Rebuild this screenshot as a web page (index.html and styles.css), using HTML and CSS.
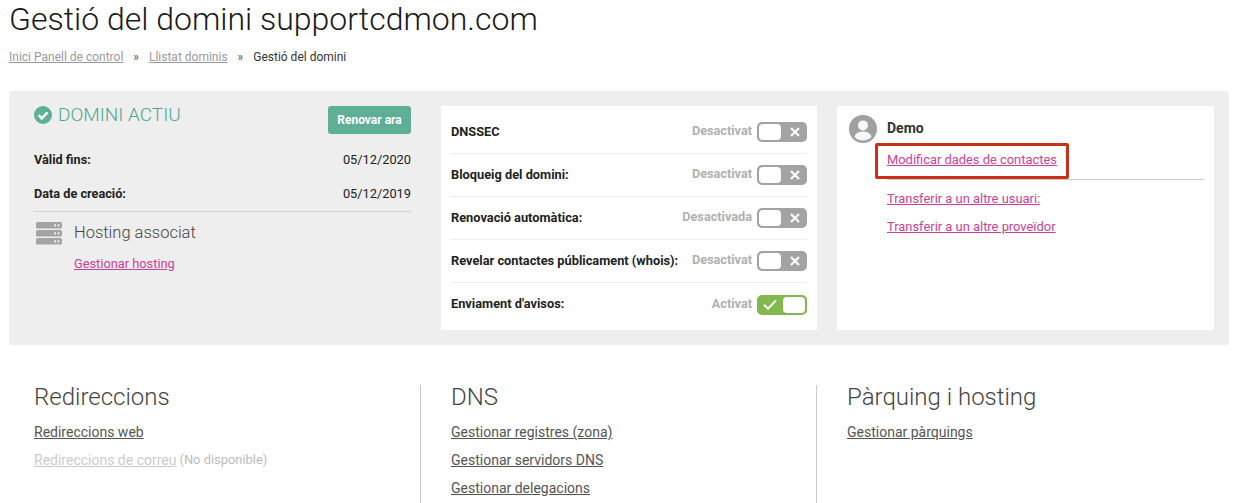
FILE: index.html
```html
<!DOCTYPE html>
<html lang="ca">
<head>
<meta charset="utf-8">
<title>Gestió del domini</title>
<link rel="stylesheet" href="styles.css">
</head>
<body>
<main class="page">
  <h1 class="title">Gestió del domini supportcdmon.com</h1>
  <nav class="crumbs">
    <a href="#">Inici Panell de control</a><span class="sep">»</span><a href="#">Llistat dominis</a><span class="sep">»</span><span class="here">Gestió del domini</span>
  </nav>

  <section class="panel">
    <div class="status">
      <div class="status-head">
        <h2 class="active">
          <svg class="check" viewBox="0 0 18 18" width="18" height="18"><circle cx="9" cy="9" r="9" fill="#5bb095"/><path d="M4.6 9.2l3.1 3.1 5.8-5.9" fill="none" stroke="#fff" stroke-width="2.6"/></svg>
          DOMINI ACTIU
        </h2>
        <a class="renew" href="#">Renovar ara</a>
      </div>
      <div class="date-row"><b>Vàlid fins:</b><span>05/12/2020</span></div>
      <div class="date-row date-last"><b>Data de creació:</b><span>05/12/2019</span></div>
      <div class="hosting">
        <svg class="server" viewBox="0 0 26 23" width="26" height="23">
          <g fill="#a3a3a3"><rect y="0" width="26" height="6.5" rx="1.5"/><rect y="8" width="26" height="6.5" rx="1.5"/><rect y="16" width="26" height="6.5" rx="1.5"/></g>
          <g fill="#eee"><rect x="18" y="2.4" width="2" height="2"/><rect x="21.5" y="2.4" width="2" height="2"/><rect x="18" y="10.4" width="2" height="2"/><rect x="21.5" y="10.4" width="2" height="2"/><rect x="18" y="18.4" width="2" height="2"/><rect x="21.5" y="18.4" width="2" height="2"/></g>
        </svg>
        <div>
          <h3 class="hosting-title">Hosting associat</h3>
          <a class="pink" href="#">Gestionar hosting</a>
        </div>
      </div>
    </div>

    <div class="card settings">
      <div class="set-row"><b>DNSSEC</b><span class="state">Desactivat</span><span class="toggle"><i class="knob"></i><svg class="mark" viewBox="0 0 10 10" width="10" height="10"><path d="M1 1l8 8M9 1l-8 8" stroke="#fff" stroke-width="2.2"/></svg></span></div>
      <div class="set-row"><b>Bloqueig del domini:</b><span class="state">Desactivat</span><span class="toggle"><i class="knob"></i><svg class="mark" viewBox="0 0 10 10" width="10" height="10"><path d="M1 1l8 8M9 1l-8 8" stroke="#fff" stroke-width="2.2"/></svg></span></div>
      <div class="set-row"><b>Renovació automàtica:</b><span class="state">Desactivada</span><span class="toggle"><i class="knob"></i><svg class="mark" viewBox="0 0 10 10" width="10" height="10"><path d="M1 1l8 8M9 1l-8 8" stroke="#fff" stroke-width="2.2"/></svg></span></div>
      <div class="set-row"><b>Revelar contactes públicament (whois):</b><span class="state">Desactivat</span><span class="toggle"><i class="knob"></i><svg class="mark" viewBox="0 0 10 10" width="10" height="10"><path d="M1 1l8 8M9 1l-8 8" stroke="#fff" stroke-width="2.2"/></svg></span></div>
      <div class="set-row"><b>Enviament d'avisos:</b><span class="state">Activat</span><span class="toggle on"><svg class="mark" viewBox="0 0 14 11" width="14" height="11"><path d="M1 5.800l4 4L13 1.400" fill="none" stroke="#fff" stroke-width="2"/></svg><i class="knob"></i></span></div>
    </div>

    <div class="card owner">
      <div class="owner-head">
        <svg class="avatar" viewBox="0 0 28 28" width="28" height="28"><circle cx="14" cy="14" r="14" fill="#a0a0a0"/><circle cx="14" cy="10.4" r="5" fill="#fff" fill-opacity=".93"/><path d="M5.500 22c1-4 4.500-5.500 8.500-5.500s7.500 1.500 8.500 5.500c-2 2.200-5 3.500-8.500 3.500s-6.500-1.300-8.500-3.500z" fill="#fff" fill-opacity=".93"/></svg>
        <b class="owner-name">Demo</b>
      </div>
      <div class="owner-links">
        <a class="pink contact" href="#">Modificar dades de contactes</a>
        <hr class="owner-rule">
        <a class="pink" href="#">Transferir a un altre usuari:</a>
        <a class="pink" href="#">Transferir a un altre proveïdor</a>
      </div>
      <div class="highlight"></div>
    </div>
  </section>

  <section class="services">
    <div class="svc">
      <h2>Redireccions</h2>
      <a href="#">Redireccions web</a>
      <p class="off"><a href="#">Redireccions de correu</a> <span>(No disponible)</span></p>
    </div>
    <div class="svc">
      <h2>DNS</h2>
      <a href="#">Gestionar registres (zona)</a>
      <a href="#">Gestionar servidors DNS</a>
      <a href="#">Gestionar delegacions</a>
    </div>
    <div class="svc">
      <h2>Pàrquing i hosting</h2>
      <a href="#">Gestionar pàrquings</a>
    </div>
  </section>
</main>
</body>
</html>
```

FILE: styles.css
```css
* { box-sizing: border-box; }
html, body { margin: 0; padding: 0; height: 503px; overflow: hidden; background: #fff; }
body { font-family: Roboto, "Liberation Sans", sans-serif; font-size: 13px; color: #222; }
.page { padding: 0 8px 0 9px; }
.title { margin: 0; height: 39px; font-size: 32px; line-height: 39px; font-weight: 300; color: #1a1a1a; }
.crumbs { margin-top: 10px; height: 16px; font-size: 12px; line-height: 16px; color: #333; }
.crumbs a { color: #9a9a9a; }
.sep { margin: 0 10px; color: #555; }
.here { color: #333; }

.panel { margin-top: 26px; height: 254px; background: #eee; border-radius: 3px; padding: 15px 15px 15px 25px; display: flex; }
.status { width: 377px; }
.status-head { display: flex; justify-content: space-between; height: 45px; }
.active { margin: 0; display: flex; align-items: flex-start; gap: 6px; font-size: 19px; line-height: 18px; font-weight: 300; color: #4fa88c; }
.check { flex: none; }
.renew { align-self: flex-start; width: 83px; height: 28px; background: #5fae96; color: #fff; border-radius: 3px; font-size: 12px; font-weight: 700; line-height: 28px; text-align: center; text-decoration: none; }
.date-row { display: flex; justify-content: space-between; height: 34px; line-height: 18px; font-size: 12.8px; color: #222; }
.date-row b { font-size: 12.7px; }
.date-last { height: 27px; padding-bottom: 8px; border-bottom: 1px solid #d4d4d4; }
.hosting { display: flex; gap: 12px; padding-top: 9px; }
.server { flex: none; margin: 1px 0 0 2px; }
.hosting-title { margin: 0; font-size: 16.5px; line-height: 24px; font-weight: 300; color: #444; }
.hosting .pink { display: inline-block; margin-top: 11px; font-size: 12.8px; }

.pink { color: #cc4196; font-size: 12.9px; }
.card { background: #fff; height: 224px; }
.settings { width: 376px; margin-left: 30px; padding: 5px 10px; }
.set-row { display: flex; align-items: center; height: 43px; border-bottom: 1px solid #eee; }
.set-row:last-child { border-bottom: 0; }
.set-row b { margin-top: -2px; font-size: 12.8px; color: #222; }
.state { margin-left: auto; margin-right: 5px; margin-top: -3px; font-size: 12.7px; font-weight: 700; color: #b0b0b0; }
.toggle { flex: none; width: 50px; height: 20px; border: 2px solid #a3a3a3; border-radius: 5px; background: #a3a3a3; display: flex; align-items: center; justify-content: space-between; }
.knob { display: block; width: 22px; height: 16px; background: #fff; border-radius: 4px; }
.mark { margin: 0 5px 0 0; }
.toggle.on { background: #82b84d; border-color: #82b84d; }
.toggle.on .mark { margin: 0 0 0 4px; }

.owner { position: relative; width: 377px; margin-left: 20px; padding: 9px 10px 0 12px; }
.owner-head { display: flex; align-items: center; gap: 10px; height: 27px; }
.avatar { flex: none; }
.owner-name { margin-top: -2px; font-size: 14px; color: #333; }
.owner-links { margin-left: 26px; padding-left: 12px; display: flex; flex-direction: column; align-items: flex-start; }
.owner-links .pink { margin-top: 10px; line-height: 18px; }
.owner-links .contact { margin-top: 9px; }
.owner-rule { width: 100%; height: 1px; margin: 10px 0 0; border: 0; background: #ccc; }
.highlight { position: absolute; left: 38px; top: 37px; width: 194px; height: 36px; border: 3px solid #c8321a; border-radius: 2px; pointer-events: none; }

.services { display: flex; margin-top: 40px; height: 118px; }
.svc { width: 396px; padding: 0 0 0 30px; border-left: 1px solid #ccc; }
.svc:first-child { border-left: 0; width: 411px; padding-left: 25px; }
.svc h2 { margin: 0 0 9px; font-size: 24px; line-height: 24px; font-weight: 300; color: #444; }
.svc a { display: block; width: max-content; color: #555; font-size: 14px; line-height: 28px; }
.svc .off { margin: 0; line-height: 28px; font-size: 12.9px; color: #bbb; display: flex; gap: 3px; }
.svc .off a { color: #ccc; font-size: 14px; }
```
